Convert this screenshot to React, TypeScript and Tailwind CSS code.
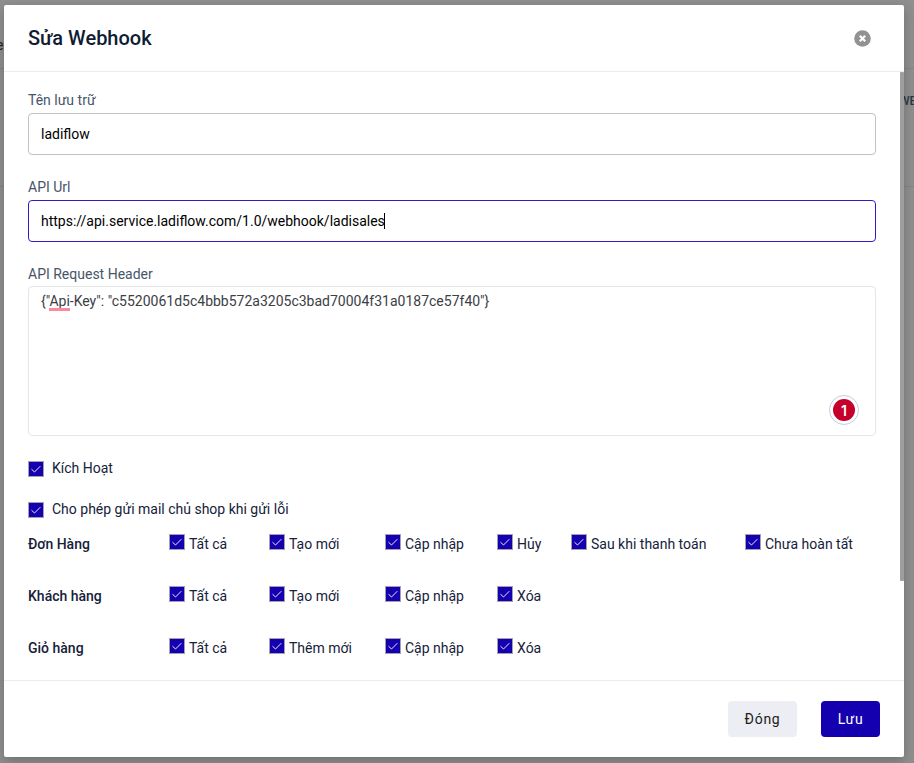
import React from "react";

function Check() {
  return (
    <span className="block h-[16px] w-[16px] shrink-0 border border-[#a3a1ae] bg-[#1500b0]">
      <svg viewBox="0 0 14 14" className="block h-[14px] w-[14px]" fill="none" stroke="#ffffff" strokeWidth="0.9">
        <path d="M2.5 7.2 L5.5 10 L11.3 4.2" />
      </svg>
    </span>
  );
}

const rows = [
  { title: "Đơn Hàng", items: ["Tất cả", "Tạo mới", "Cập nhập", "Hủy", "Sau khi thanh toán", "Chưa hoàn tất"] },
  { title: "Khách hàng", items: ["Tất cả", "Tạo mới", "Cập nhập", "Xóa"] },
  { title: "Giỏ hàng", items: ["Tất cả", "Thêm mới", "Cập nhập", "Xóa"] },
];

function Header() {
  return (
    <header className="flex h-[67px] shrink-0 items-center justify-between border-b border-[#ebedef] pr-[33px] pl-6">
      <h1 className="text-[20px] leading-[30px] font-medium text-[#0f1c34]">Sửa Webhook</h1>
      <svg viewBox="0 0 17 17" className="h-[17px] w-[17px]">
        <circle cx="8.5" cy="8.5" r="8.3" fill="#929292" />
        <path d="M5.8 5.8 L11.2 11.2 M11.2 5.8 L5.8 11.2" stroke="#fff" strokeWidth="2.2" />
      </svg>
    </header>
  );
}

export default function App() {
  return (
    <div className="relative h-[763px] w-[914px] overflow-hidden bg-[#8f8f8f] font-['Roboto','Noto_Sans',sans-serif] text-[14px] leading-5 text-[#16213a]">
      <div className="absolute top-[68px] left-0 h-px w-full bg-[#848484]" />
      <div className="absolute top-[186px] left-0 h-px w-full bg-[#848484]" />
      <span className="absolute top-[35px] left-[-4px] text-[#222]">e</span>
      <span className="absolute top-[91px] left-[899px] text-[12px] font-medium text-[#2c3645]">WE</span>

      <div className="absolute top-[5px] left-[4px] flex h-[752px] w-[900px] flex-col rounded-[2px] bg-white shadow-[0_4px_12px_rgba(0,0,0,0.22)]">
        <Header />
        <main className="flex min-h-0 flex-1 justify-between">
          <div className="flex w-[872px] flex-col pt-[18px] pl-6">
            <label className="text-[#475569]">Tên lưu trữ</label>
            <div className="mt-[3px] flex h-[42px] items-center rounded-[4px] border border-[#c0c2c8] px-3 text-black">ladiflow</div>

            <label className="mt-[22px] text-[#475569]">API Url</label>
            <div className="mt-[3px] flex h-[42px] items-center rounded-[4px] border border-[#3a16c8] px-3 text-black">
              https://api.service.ladiflow.com/1.0/webhook/ladisales
              <span className="-ml-px h-4 w-px bg-black" />
            </div>

            <label className="mt-[22px] text-[#475569]">API Request Header</label>
            <div className="mt-[2px] flex h-[150px] flex-col justify-between rounded-[4px] border border-[#e4e6ea] px-3 pt-1 pb-[10px] text-[#3b4045]">
              <div>
                {'{"'}
                <span className="relative">
                  Api
                  <span className="absolute bottom-[-2px] left-0 h-[3px] w-full bg-[#ff86a0]" />
                </span>
                {'-Key": "c5520061d5c4bbb572a3205c3bad70004f31a0187ce57f40"}'}
              </div>
              <div className="mr-[4px] flex h-[30px] w-[30px] items-center justify-center self-end rounded-full border border-[#c9ccda] bg-white">
                <div className="flex h-[22px] w-[22px] items-center justify-center rounded-full bg-[#c4002b] pt-px font-['Inter',sans-serif] text-[14px] font-semibold text-white">1</div>
              </div>
            </div>

            <div className="mt-[22px] flex h-5 items-center gap-2"><div className="pt-[2px]"><Check /></div>Kích Hoạt</div>
            <div className="mt-[21px] flex h-5 items-center gap-2"><div className="pt-[2px]"><Check /></div>Cho phép gửi mail chủ shop khi gửi lỗi</div>

            <div className="mt-[15px] flex flex-col gap-8">
              {rows.map((row) => (
                <div key={row.title} className="grid h-5 grid-cols-[141px_100px_116px_112px_74px_174px_1fr] whitespace-nowrap">
                  <span className="font-medium">{row.title}</span>
                  {row.items.map((item) => (
                    <div key={item} className="flex items-start gap-1"><Check />{item}</div>
                  ))}
                </div>
              ))}
            </div>
          </div>
          <div className="h-[509px] w-[4px] rounded-[1px] bg-[#9e9e9e]" />
        </main>
        <footer className="flex h-[77px] shrink-0 items-center justify-end gap-6 border-t border-[#e9eeee] pr-6">
          <button className="h-9 w-[69px] rounded-[4px] bg-[#edeef3] tracking-[0.7px] text-[#202020]">Đóng</button>
          <button className="h-9 w-[59px] rounded-[4px] bg-[#1500b0] tracking-[0.7px] text-white">Lưu</button>
        </footer>
      </div>
    </div>
  );
}
